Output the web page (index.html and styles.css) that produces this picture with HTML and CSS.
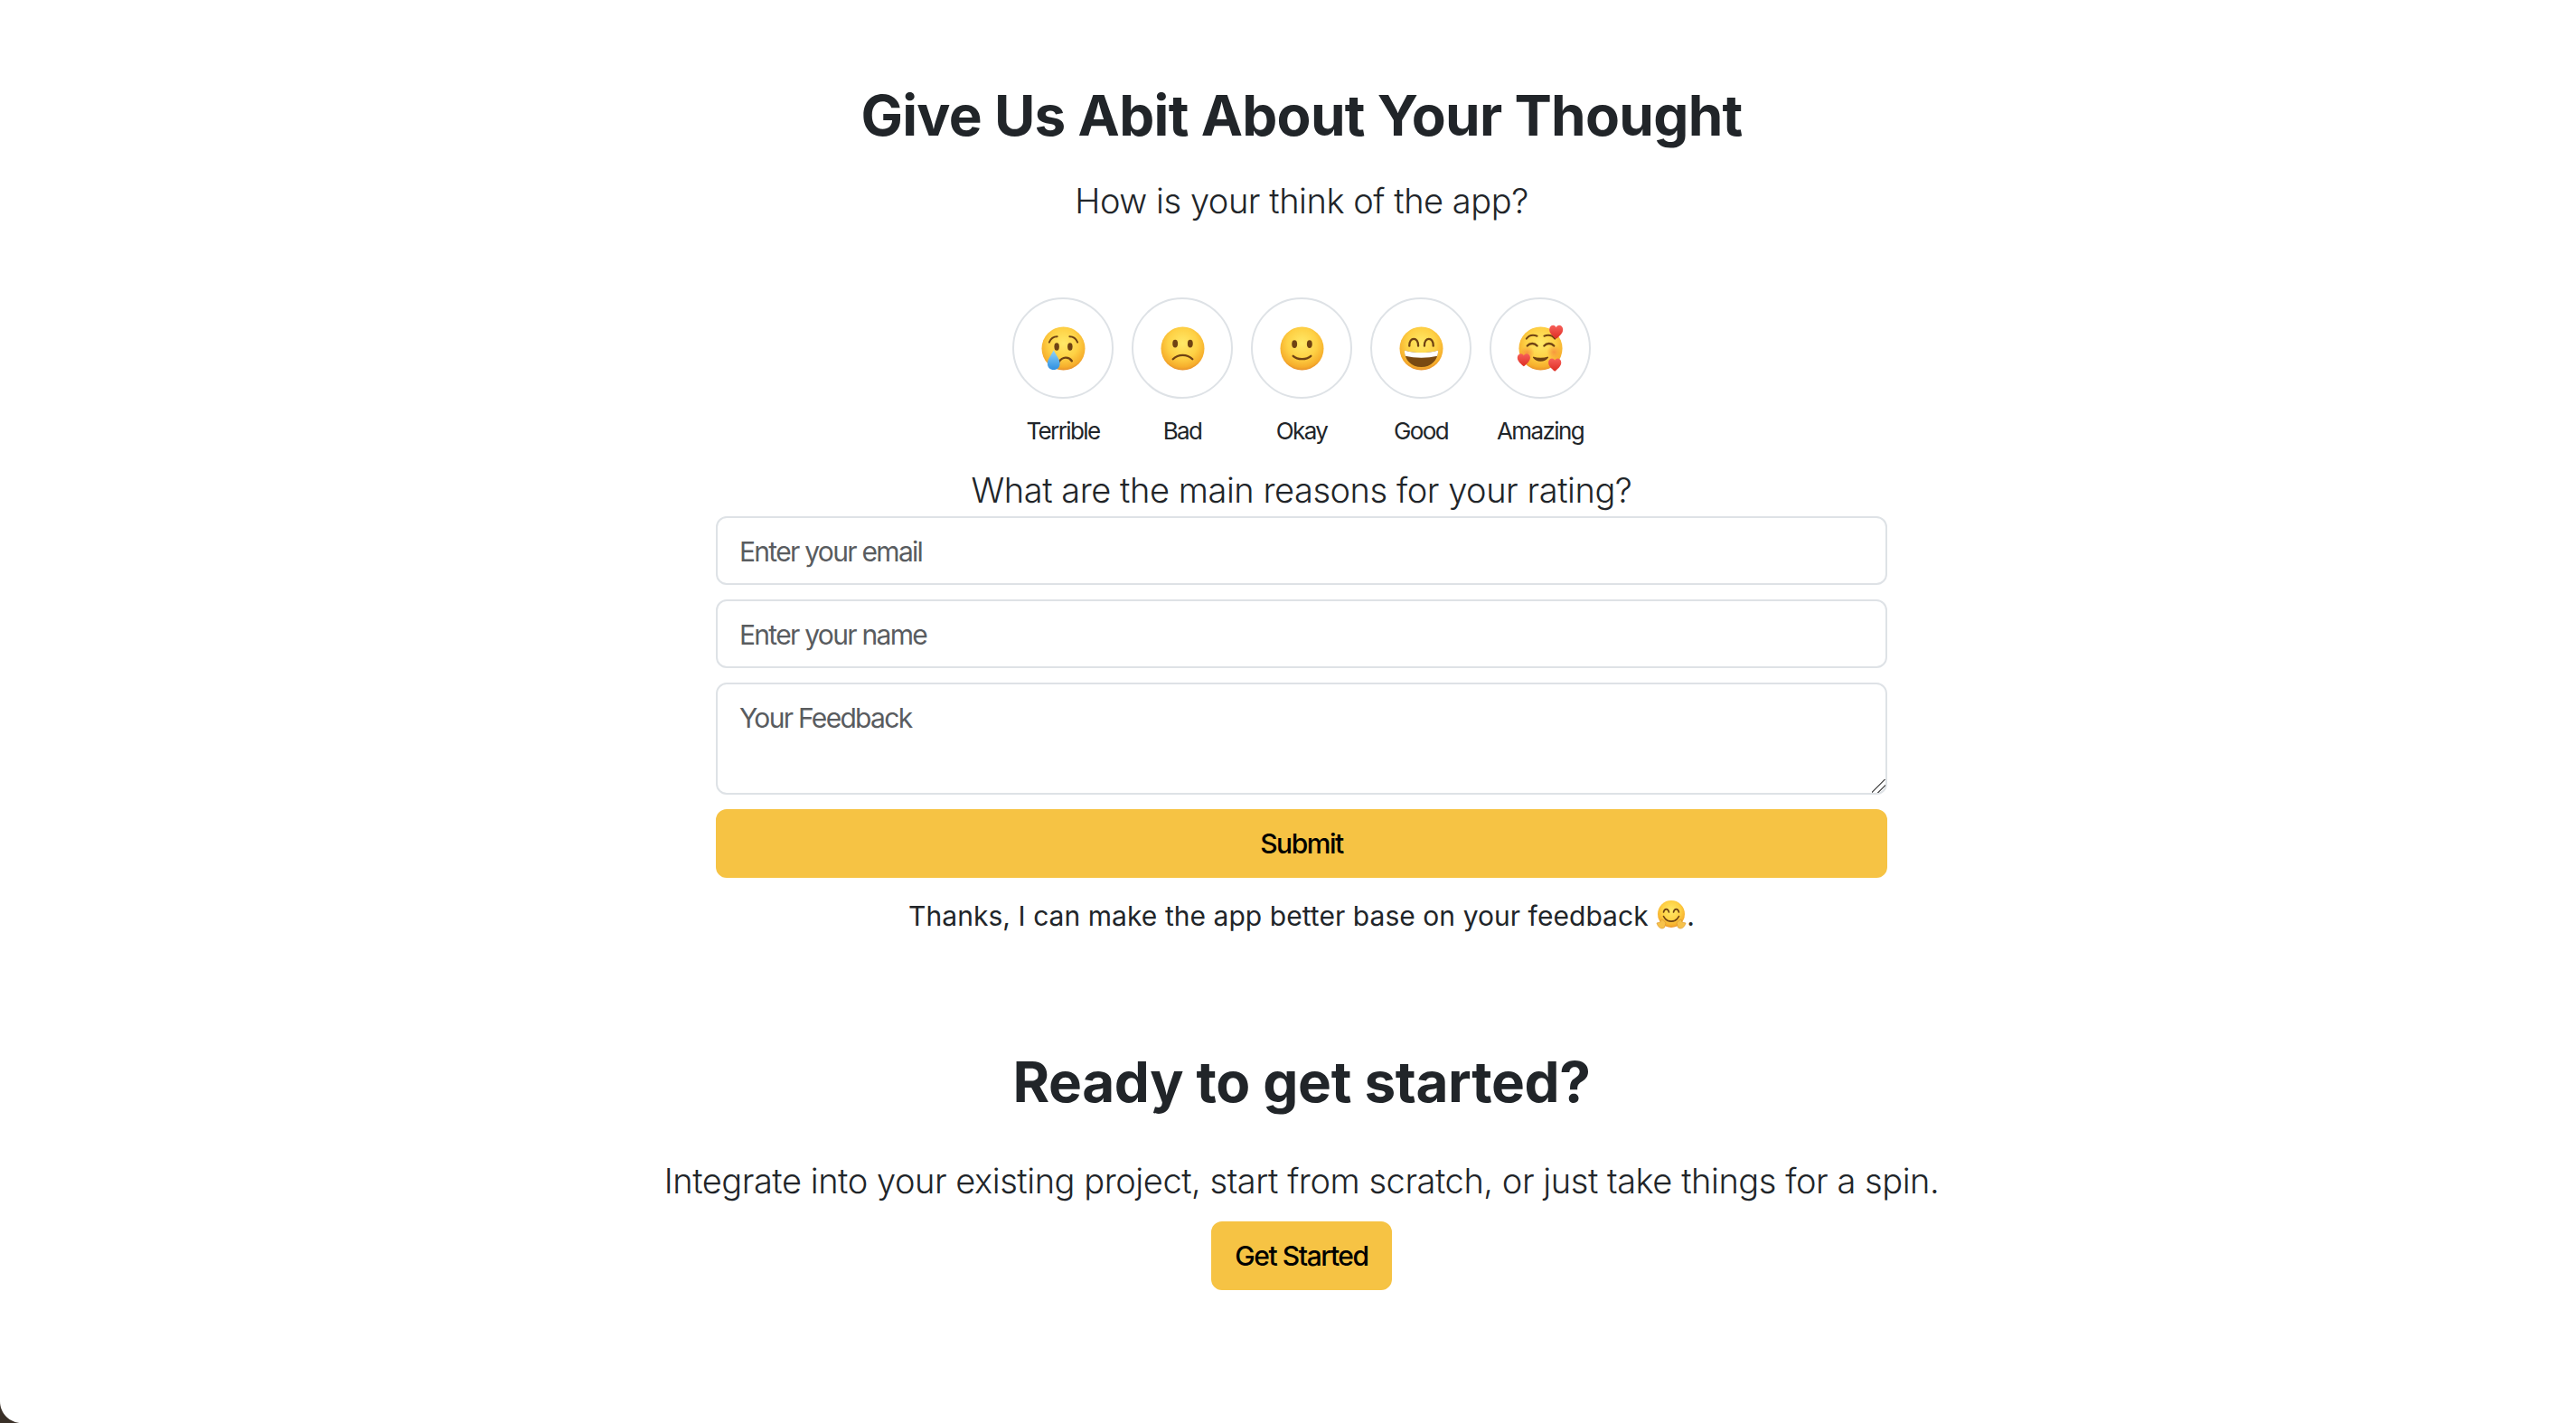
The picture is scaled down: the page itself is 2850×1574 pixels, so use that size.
FILE: index.html
```html
<!DOCTYPE html>
<html lang="en">
<head>
<meta charset="utf-8">
<title>Feedback</title>
<link rel="stylesheet" href="styles.css">
</head>
<body>
<svg class="defs" width="0" height="0" aria-hidden="true">
  <defs>
    <radialGradient id="face" cx="50%" cy="38%" r="62%">
      <stop offset="0" stop-color="#ffe968"/>
      <stop offset="0.55" stop-color="#fed145"/>
      <stop offset="0.88" stop-color="#f6ae2c"/>
      <stop offset="1" stop-color="#e8912a"/>
    </radialGradient>
    <radialGradient id="blush" cx="50%" cy="50%" r="50%">
      <stop offset="0" stop-color="#f58a3c" stop-opacity=".8"/>
      <stop offset="1" stop-color="#f58a3c" stop-opacity="0"/>
    </radialGradient>
    <linearGradient id="tear" x1="0" y1="0" x2="0" y2="1">
      <stop offset="0" stop-color="#8fd4f8"/>
      <stop offset="1" stop-color="#2f8fe0"/>
    </linearGradient>
    <linearGradient id="heart" x1="0" y1="0" x2="0" y2="1">
      <stop offset="0" stop-color="#f7605a"/>
      <stop offset="1" stop-color="#dd2c22"/>
    </linearGradient>
    <symbol id="heart-shape" viewBox="0 0 20 20">
      <path d="M10 19C4 14 1 11 1 6.500C1 3 3.500 1 6 1C8 1 9.300 2.200 10 3.800C10.700 2.200 12 1 14 1C16.500 1 19 3 19 6.500C19 11 16 14 10 19Z" fill="url(#heart)"/>
    </symbol>
  </defs>
</svg>

<main class="page">
  <h1 class="title">Give Us Abit About Your Thought</h1>
  <p class="lead">How is your think of the app?</p>

  <ul class="ratings">
    <li class="rating">
      <span class="circle">
        <svg class="emoji" viewBox="0 0 50 50">
          <circle cx="25" cy="25" r="24.500" fill="url(#face)"/>
          <path d="M9 18C11 13 14 11.500 18 11.500" class="brow"/>
          <path d="M41 18C39 13 36 11.500 32 11.500" class="brow"/>
          <ellipse cx="17.500" cy="23" rx="2.800" ry="4.300" fill="#6f4213"/>
          <ellipse cx="32.500" cy="23" rx="2.800" ry="4.300" fill="#6f4213"/>
          <path d="M20 40C24 34 31 34 34.500 39" class="line"/>
          <path d="M14 27C17 33 21 37 21 42C21 46 18 49 14 49C10 49 7 46 7 42C7 37 11 33 14 27Z" fill="url(#tear)"/>
        </svg>
      </span>
      <span class="label">Terrible</span>
    </li>
    <li class="rating">
      <span class="circle">
        <svg class="emoji" viewBox="0 0 50 50">
          <circle cx="25" cy="25" r="24.500" fill="url(#face)"/>
          <ellipse cx="16.500" cy="19.500" rx="3" ry="4.500" fill="#6f4213"/>
          <ellipse cx="33.500" cy="19.500" rx="3" ry="4.500" fill="#6f4213"/>
          <path d="M14 37C20 31 30 31 36 37" class="line"/>
        </svg>
      </span>
      <span class="label">Bad</span>
    </li>
    <li class="rating">
      <span class="circle">
        <svg class="emoji" viewBox="0 0 50 50">
          <circle cx="25" cy="25" r="24.500" fill="url(#face)"/>
          <ellipse cx="16.500" cy="20" rx="3" ry="4.500" fill="#6f4213"/>
          <ellipse cx="33.500" cy="20" rx="3" ry="4.500" fill="#6f4213"/>
          <path d="M15 33.500C20 38 30 38 35 33.500" class="line"/>
        </svg>
      </span>
      <span class="label">Okay</span>
    </li>
    <li class="rating">
      <span class="circle">
        <svg class="emoji" viewBox="0 0 50 50">
          <circle cx="25" cy="25" r="24.500" fill="url(#face)"/>
          <path d="M11.500 22C11.500 11.500 21.500 11.500 21.500 22" class="line"/>
          <path d="M28.500 22C28.500 11.500 38.500 11.500 38.500 22" class="line"/>
          <path d="M6 27C17 30.500 33 30.500 44 27C44 38 36 46 25 46C14 46 6 38 6 27Z" fill="#7a4a12"/>
          <path d="M6 27C17 30.500 33 30.500 44 27C44 29 43.700 31.500 43 33.500C32 36 18 36 7 33.500C6.300 31.500 6 29 6 27Z" fill="#fff"/>
        </svg>
      </span>
      <span class="label">Good</span>
    </li>
    <li class="rating">
      <span class="circle">
        <svg class="emoji amazing" viewBox="-2 -2 54 54">
          <circle cx="25" cy="25" r="24.500" fill="url(#face)"/>
          <circle cx="10" cy="30" r="8" fill="url(#blush)"/>
          <circle cx="40" cy="29" r="8" fill="url(#blush)"/>
          <path d="M9 14C12 10 17 9.500 21 11" class="brow"/>
          <path d="M41 14C38 10 33 9.500 29 11" class="brow"/>
          <path d="M10 22C13 18.500 18 18.500 21 22" class="line"/>
          <path d="M29 22C32 18.500 37 18.500 40 22" class="line"/>
          <path d="M17 35C21 40 29 40 33 35C29 36.500 21 36.500 17 35Z" fill="#6f4213" stroke="#6f4213" stroke-width="1.500" stroke-linejoin="round"/>
          <use href="#heart-shape" x="34" y="-2" width="17" height="17"/>
          <use href="#heart-shape" x="-2" y="30" width="16" height="16"/>
          <use href="#heart-shape" x="33" y="35" width="16" height="17"/>
        </svg>
      </span>
      <span class="label">Amazing</span>
    </li>
  </ul>

  <h2 class="question">What are the main reasons for your rating?</h2>

  <form class="form">
    <input class="field" type="email" placeholder="Enter your email">
    <input class="field" type="text" placeholder="Enter your name">
    <textarea class="field area" placeholder="Your Feedback"></textarea>
    <button class="btn btn-full" type="button">Submit</button>
  </form>

  <p class="thanks">Thanks, I can make the app better base on your feedback <svg class="hug" viewBox="0 0 34 34">
      <circle cx="17" cy="15" r="15" fill="url(#face)"/>
      <path d="M8.500 13C9.500 8.500 13.500 8.500 14.500 13" class="hug-line"/>
      <path d="M19.500 13C20.500 8.500 24.500 8.500 25.500 13" class="hug-line"/>
      <path d="M8.500 17.500C12 25 22 25 25.500 17.500" class="hug-line"/>
      <path d="M1 25L5 24L6 21L8.500 22L11 25L9.500 30C6 32.500 2.500 30 1 25Z" fill="#f7c24a" stroke="#dd9a2f" stroke-width=".7"/>
      <path d="M33 25L29 24L28 21L25.500 22L23 25L24.500 30C28 32.500 31.500 30 33 25Z" fill="#f7c24a" stroke="#dd9a2f" stroke-width=".7"/>
    </svg>.</p>

  <h2 class="title title-second">Ready to get started?</h2>
  <p class="lead lead-second">Integrate into your existing project, start from scratch, or just take things for a spin.</p>
  <button class="btn btn-start" type="button">Get Started</button>
</main>

<svg class="corner" viewBox="0 0 24 24" aria-hidden="true">
  <path d="M0 0V24H24C10.700 24 0 13.300 0 0Z" fill="#3a3028"/>
</svg>
</body>
</html>
```

FILE: styles.css
```css
* {
  box-sizing: border-box;
}

html,
body {
  margin: 0;
  height: 100%;
  overflow: hidden;
  background: #fff;
}

body {
  color: #212529;
  font-family: Inter, "Liberation Sans", sans-serif;
  font-size: 30px;
  line-height: 48px;
}

.defs {
  position: absolute;
}

.page {
  display: flex;
  flex-direction: column;
  align-items: center;
  padding-top: 89px;
  padding-left: 30px;
}

.title {
  margin: 0;
  font-size: 62px;
  font-weight: 700;
  line-height: 77px;
  letter-spacing: -0.7px;
}

.title-second {
  margin-top: 121px;
  letter-spacing: -0.35px;
}

.lead {
  margin: 26px 0 0;
  font-size: 38px;
  font-weight: 300;
  line-height: 60px;
  letter-spacing: -0.45px;
}

.lead-second {
  margin-top: 41px;
}

.ratings {
  display: flex;
  gap: 20px;
  margin: 77px 0 0;
  padding: 0;
  list-style: none;
}

.rating {
  display: flex;
  flex-direction: column;
  align-items: center;
  width: 112px;
}

.circle {
  display: flex;
  align-items: center;
  justify-content: center;
  width: 112px;
  height: 112px;
  border: 2px solid #dee2e6;
  border-radius: 50%;
}

.emoji {
  display: block;
  width: 49px;
  height: 49px;
  overflow: visible;
}

.amazing {
  width: 53px;
  height: 53px;
}

.brow,
.line {
  fill: none;
  stroke: #6f4213;
  stroke-linecap: round;
}

.brow {
  stroke-width: 2;
}

.line {
  stroke-width: 2.400;
}

.label {
  margin-top: 15px;
  font-size: 26px;
  line-height: 42px;
  letter-spacing: -1.6px;
  white-space: nowrap;
}

.question {
  margin: 20px 0 0;
  font-size: 38px;
  font-weight: 300;
  line-height: 48px;
  letter-spacing: -0.45px;
}

.form {
  display: flex;
  flex-direction: column;
  gap: 16px;
  width: 1296px;
  margin-top: 5px;
}

.field {
  display: block;
  width: 100%;
  height: 76px;
  padding: 13px 24px 11px;
  border: 2px solid #dee2e6;
  border-radius: 12px;
  background: #fff;
  color: #212529;
  font-family: inherit;
  font-size: 30px;
  line-height: 48px;
  letter-spacing: -1.7px;
  outline: none;
}

.field::placeholder {
  color: #595c5f;
  opacity: 1;
}

.area {
  height: 124px;
  resize: vertical;
}

.area::-webkit-resizer {
  background: linear-gradient(135deg, transparent 44%, #666 44% 52%, transparent 52% 68%, #666 68% 76%, transparent 76%);
}

.btn {
  height: 76px;
  padding: 12px 24px;
  border: 2px solid #f6c344;
  border-radius: 12px;
  background: #f6c344;
  color: #000;
  font-family: inherit;
  font-size: 30px;
  font-weight: 500;
  line-height: 48px;
  letter-spacing: -1.45px;
}

.btn-full {
  width: 100%;
}

.btn-start {
  margin-top: 15px;
}

.thanks {
  margin: 18px 0 0;
  letter-spacing: 0.05px;
  white-space: nowrap;
}

.hug {
  display: inline-block;
  width: 34px;
  height: 34px;
  vertical-align: -6px;
}

.hug-line {
  fill: none;
  stroke: #6f4213;
  stroke-width: 1.600;
  stroke-linecap: round;
}

.corner {
  position: absolute;
  left: 0;
  bottom: 0;
  width: 24px;
  height: 24px;
}
```
